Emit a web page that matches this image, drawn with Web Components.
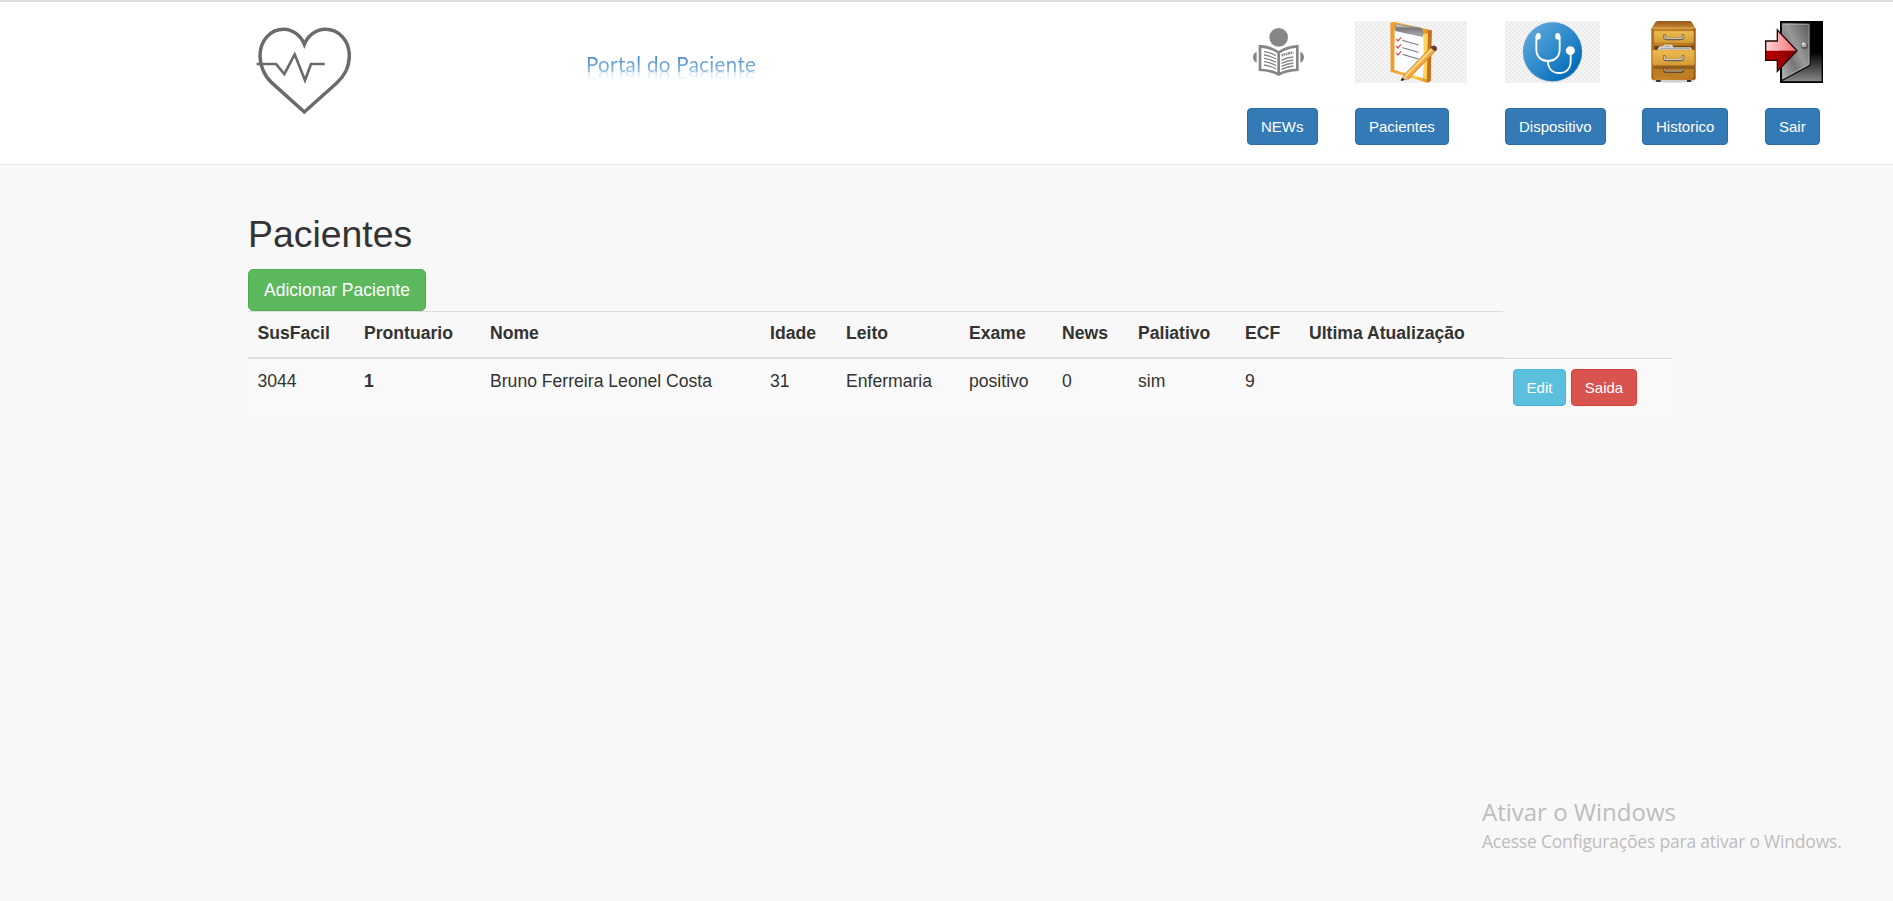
<!DOCTYPE html>
<html lang="pt-BR">
<head>
<meta charset="utf-8">
<title>Portal do Paciente</title>
<style>
html,body{height:100%}
body{margin:0;background:#f8f8f8;font-family:"Liberation Sans",Arial,sans-serif;color:#333;overflow:hidden}
</style>
</head>
<body>
<portal-app></portal-app>
<script>
const define=(name,html)=>customElements.define(name,class extends HTMLElement{
  constructor(){super();this.attachShadow({mode:'open'}).innerHTML=html;}
});

define('ui-button',`<style>
:host{display:inline-flex;box-sizing:border-box;height:37px;padding:0 13px;border:1px solid #2e6da4;border-radius:4px;background:#337ab7;color:#fff;font-size:15px;align-items:center;justify-content:center;white-space:nowrap}
:host([variant=success]){background:#5cb85c;border-color:#4cae4c;height:42px;width:178px;font-size:17.5px;border-radius:5px}
:host([variant=info]){background:#5bc0de;border-color:#46b8da;width:53px;padding:0}
:host([variant=danger]){background:#d9534f;border-color:#d43f3a;width:66px;padding:0}
</style><slot></slot>`);

const icons={
logo:`<svg width="96" height="90" viewBox="76 75 288 270" fill="none" stroke="#6b6b6b"><path d="M224 336L126 248C104 228 91 196 91 168C91 122 122 88 162 88C190 88 214 108 224 133C234 108 258 88 287 88C328 88 359 122 359 168C359 200 346 226 322 248Z" stroke-width="10.5"/><path d="M81 192H139L164 222L195 163L226 241L244 192H285" stroke-width="8"/></svg>`,
news:`<svg width="62" height="62" viewBox="51 63 186 186"><g fill="#868686"><circle cx="146" cy="112" r="28"/><path d="M80 155Q69 160 69 171Q69 183 80 188ZM211 155Q222 160 222 171Q222 183 211 188Z"/><path d="M86 134Q123 136 146 153Q169 136 206 134V213Q169 214 146 228Q123 214 86 213Z"/></g><path d="M94 144Q122 146 142 160V217Q122 207 94 206ZM198 144Q170 146 150 160V217Q170 207 198 206Z" fill="#fff"/><g stroke="#868686" stroke-width="4" fill="none"><path d="M102 155Q122 158 138 167M102 165Q122 168 138 177M102 175Q122 178 138 187M102 185Q122 188 138 197M102 195Q122 198 138 207"/><path d="M155 167Q170 160 190 158" stroke-width="8" stroke-dasharray="5 2"/><path d="M154 181Q170 172 190 171M154 190Q170 182 190 180M154 199Q170 191 190 189M154 208Q170 200 190 198"/></g></svg>`,
list:`<svg width="112" height="62" viewBox="375 63 336 186"><defs><pattern id="p" width="12" height="12" patternUnits="userSpaceOnUse"><rect width="12" height="12" fill="#f6f6f6"/><path d="M0 0h6v6H0zM6 6h6v6H6z" fill="#ebebeb"/></pattern><linearGradient id="o"><stop stop-color="#ee982c"/><stop offset=".6" stop-color="#ffc947"/><stop offset="1" stop-color="#d87914"/></linearGradient><linearGradient id="c" x2="0" y2="1"><stop stop-color="#eee"/><stop offset=".35" stop-color="#777"/><stop offset="1" stop-color="#b5b5b5"/></linearGradient><linearGradient id="n" x2="1" y2="1"><stop stop-color="#ffd75b"/><stop offset=".5" stop-color="#f7ad42"/><stop offset="1" stop-color="#c86819"/></linearGradient></defs><rect x="375" y="63" width="336" height="186" fill="url(#p)"/><path d="M481 69L491 65L605 91L602 242L592 248L482 215Z" fill="url(#o)"/><path d="M592 93L605 91L602 242L592 248Z" fill="#c96f1b"/><path d="M494 83L585 103L580 235L493 210Z" fill="#fbfcff"/><path d="M580 103L594 99L590 238L582 237Z" fill="#ffd45a"/><path d="M497 76Q498 71 505 73L571 84Q579 87 578 94V109L496 92Z" fill="url(#c)" stroke="#777" stroke-width="2"/><path d="M517 121L566 135M517 143L566 157M517 163L566 177" stroke="#555" stroke-width="2.500"/><path d="M499 117L504 123L513 112M499 138L504 144L513 133M499 159L504 165L513 154" fill="none" stroke="#e55252" stroke-width="4"/><path d="M522 225L605 139L619 150L536 237L513 241Z" fill="url(#n)" stroke="#9e5a19" stroke-width="1.500"/><path d="M527 228L609 144" stroke="#ffe29a" stroke-width="4"/><path d="M601 143L606 138Q613 134 619 140Q624 146 619 151L615 154Z" fill="#693c32"/><path d="M522 226L535 237L513 241Z" fill="#e9bf87"/><path d="M517 233L524 240L512 242Z" fill="#111"/></svg>`,
device:`<svg width="95" height="62" viewBox="75 63 285 186"><defs><pattern id="p" width="12" height="12" patternUnits="userSpaceOnUse"><rect width="12" height="12" fill="#f6f6f6"/><path d="M0 0h6v6H0zM6 6h6v6H6z" fill="#ebebeb"/></pattern><linearGradient id="b" x2="1" y2="1"><stop offset=".1" stop-color="#5da7da"/><stop offset=".5" stop-color="#2e8acb"/><stop offset=".8" stop-color="#0870bb"/></linearGradient></defs><rect x="75" y="63" width="285" height="186" fill="url(#p)"/><circle cx="217.500" cy="157" r="90" fill="#9aa3aa" opacity=".4"/><circle cx="217.500" cy="155.500" r="88.500" fill="url(#b)"/><g fill="none" stroke="#fff" stroke-width="5.500"><path d="M174 109H169V148C169 171 184 183 204 183S239 171 239 148V109H234"/><path d="M204 183C204 206 217 219 238 219S272 205 272 184V156"/></g><rect x="168" y="99" width="14" height="20" rx="7" fill="#fff"/><rect x="226" y="99" width="14" height="20" rx="7" fill="#fff"/><circle cx="271" cy="152" r="13.500" fill="#fff"/></svg>`,
history:`<svg width="62" height="62" viewBox="36 63 186 186"><defs><linearGradient id="w" x2="0" y2="1"><stop stop-color="#eebc50"/><stop offset="1" stop-color="#d49a34"/></linearGradient><linearGradient id="t" x2="0" y2="1"><stop stop-color="#965a1b"/><stop offset="1" stop-color="#ca892e"/></linearGradient><linearGradient id="s"><stop stop-color="#9e6120"/><stop offset=".1" stop-color="#c98729"/><stop offset=".9" stop-color="#bd7823"/><stop offset="1" stop-color="#8a4e17"/></linearGradient></defs><ellipse cx="131" cy="242" rx="62" ry="6" fill="#aaa" opacity=".55"/><path d="M77 233h15v13H79zM171 233h14l-2 13h-12z" fill="#3c3027"/><path d="M64 84H197V235Q197 240 191 240H70Q64 240 64 234Z" fill="url(#s)"/><path d="M77 65Q79 63 83 63H179Q183 63 185 66L197 86H64Z" fill="url(#t)"/><path d="M67 84H194" stroke="#f0c978" stroke-width="2"/><rect x="71" y="92" width="121" height="38" rx="3" fill="url(#w)" stroke="#ae731e" stroke-width="2"/><path d="M73 137H190V151H73Z" fill="#714213"/><path d="M81 151L89 139L99 139L103 134H126L130 142H183L187 151Z" fill="#dedbd5"/><path d="M91 145H180M104 139H121" stroke="#8e949b" stroke-width="2.500"/><rect x="67" y="150" width="127" height="46" rx="3" fill="url(#w)" stroke="#bd8022" stroke-width="1.500"/><path d="M71 197H191V227Q191 231 187 231H75Q71 231 71 227Z" fill="#bd7d21"/><path d="M71 197H191V207H71Z" fill="#82501b" opacity=".7"/><g fill="none" stroke-linecap="round"><path d="M103 106V111Q103 117 111 117H151Q159 117 159 111V106" stroke="#6c614f" stroke-width="8"/><path d="M103 106V110Q103 115 111 115H151Q159 115 159 110V106" stroke="#c7bfb0" stroke-width="4"/><path d="M103 169V174Q103 180 111 180H151Q159 180 159 174V169" stroke="#6c614f" stroke-width="8"/><path d="M103 169V173Q103 178 111 178H151Q159 178 159 173V169" stroke="#d2cabb" stroke-width="4"/><path d="M103 205V209Q103 215 111 215H151Q159 215 159 209V205" stroke="#624b32" stroke-width="8"/><path d="M103 205V208Q103 213 111 213H151Q159 213 159 208V205" stroke="#a99679" stroke-width="4"/></g></svg>`,
exit:`<svg width="58" height="62" viewBox="405 63 174 186"><defs><linearGradient id="d" x1="0" y1="1" x2="1" y2="0"><stop stop-color="#bababa"/><stop offset=".35" stop-color="#777"/><stop offset=".55" stop-color="#999"/><stop offset="1" stop-color="#555"/></linearGradient><linearGradient id="f" x2="0" y2="1"><stop offset=".5"/><stop offset="1" stop-color="#888"/></linearGradient><linearGradient id="u"><stop stop-color="#ffd5d5"/><stop offset="1" stop-color="#f56d70"/></linearGradient><linearGradient id="r"><stop stop-color="#c00000"/><stop offset="1" stop-color="#800000"/></linearGradient></defs><rect x="450" y="63" width="129" height="186"/><path d="M456 69H575V244H456Z" fill="url(#f)"/><path d="M455 67L540 69V196L455 242Z" fill="url(#d)" stroke="#111" stroke-width="4"/><path d="M458 73L537 73V192L458 236Z" fill="none" stroke="#b7bebd" stroke-width="2"/><circle cx="524" cy="137" r="10" fill="#555"/><circle cx="522" cy="134" r="7.500" fill="#aab0af"/><circle cx="520" cy="131" r="3" fill="#fff"/><path d="M407 123H442V90L501 152H407Z" fill="url(#u)"/><path d="M407 152H501L442 214V181H407Z" fill="url(#r)"/><path d="M407 123H442V90L501 152L442 214V181H407Z" fill="none" stroke="#210606" stroke-width="4"/></svg>`
};
customElements.define('ui-icon',class extends HTMLElement{
  constructor(){super();this.attachShadow({mode:'open'});}
  connectedCallback(){this.shadowRoot.innerHTML='<style>:host{display:block}svg{display:block}</style>'+icons[this.getAttribute('name')];}
});

define('nav-item',`<style>:host{display:flex;flex-direction:column;align-items:flex-start;gap:25px}</style><slot name="icon"></slot><ui-button><slot></slot></ui-button>`);

define('brand-title',`<style>
:host{display:block;font:20.5px/24px Lato,sans-serif;white-space:nowrap}
span{display:inline-block;height:24px;letter-spacing:.35px;color:transparent;background:linear-gradient(#4f8fcb 25%,#8fbde7 80%);-webkit-background-clip:text;background-clip:text;-webkit-box-reflect:below -9px linear-gradient(transparent 45%,rgba(0,0,0,.6));filter:blur(.3px)}
</style><span><slot></slot></span>`);

define('portal-header',`<style>
:host{display:flex;box-sizing:border-box;height:165px;background:#fff;border-top:2px solid #ddd;border-bottom:1px solid #e7e7e7}
.logo{margin:23px 0 0 255px}
brand-title{margin:50px 0 0 235px;width:170px}
nav{display:grid;grid-template-columns:108px 150px 137px 123px 60px;align-content:start;margin:19px 0 0 auto;padding-right:68px}
</style>
<ui-icon class="logo" name="logo"></ui-icon>
<brand-title>Portal do Paciente</brand-title>
<nav>
<nav-item><ui-icon slot="icon" name="news"></ui-icon>NEWs</nav-item>
<nav-item><ui-icon slot="icon" name="list"></ui-icon>Pacientes</nav-item>
<nav-item><ui-icon slot="icon" name="device"></ui-icon>Dispositivo</nav-item>
<nav-item><ui-icon slot="icon" name="history"></ui-icon>Historico</nav-item>
<nav-item><ui-icon slot="icon" name="exit"></ui-icon>Sair</nav-item>
</nav>`);

define('patient-table',`<style>
:host{display:block;width:1425px}
.row{display:grid;grid-template-columns:106px 126px 280px 76px 123px 93px 76px 107px 64px 204px 170px;font-size:17.6px;line-height:25px;white-space:nowrap}
.row>*{box-sizing:border-box;padding:9px 0 0 10px}
.row>:first-child{padding-left:9.5px}
.head>*{height:48px;border-top:1px solid #ddd;border-bottom:2px solid #ddd;font-weight:bold}
.head>:last-child{border-top:0;border-bottom:0;box-shadow:inset 0 -1px #ddd}
.body{height:56px;background:#f9f9f9}
.body>*{padding-top:9.5px}
.body>.actions{display:flex;gap:5px;padding:10px 0 0 10px}
</style>
<div class="row head"><span>SusFacil</span><span>Prontuario</span><span>Nome</span><span>Idade</span><span>Leito</span><span>Exame</span><span>News</span><span>Paliativo</span><span>ECF</span><span>Ultima Atualização</span><span></span></div>
<div class="row body"><span>3044</span><b>1</b><span>Bruno Ferreira Leonel Costa</span><span>31</span><span>Enfermaria</span><span>positivo</span><span>0</span><span>sim</span><span>9</span><span></span><span class="actions"><ui-button variant="info">Edit</ui-button><ui-button variant="danger">Saida</ui-button></span></div>`);

define('windows-notice',`<style>
:host{display:block;position:absolute;left:1482px;top:795px;font-family:"Open Sans","Noto Sans",sans-serif;color:#bdbdbd;white-space:nowrap}
div{font-size:24px;line-height:34px}
p{margin:0;font-size:17.5px;line-height:24px;letter-spacing:-.2px}
</style><div>Ativar o Windows</div><p>Acesse Configurações para ativar o Windows.</p>`);

define('portal-app',`<style>
:host{display:block;height:901px}
main{padding:49px 0 0 248px}
h1{margin:0 0 14px;padding-bottom:1px;font-size:37.4px;line-height:40px;font-weight:400}
ui-button{display:flex}
</style>
<portal-header></portal-header>
<main><h1>Pacientes</h1><ui-button variant="success">Adicionar Paciente</ui-button><patient-table></patient-table></main>
<windows-notice></windows-notice>`);
</script>
</body>
</html>
